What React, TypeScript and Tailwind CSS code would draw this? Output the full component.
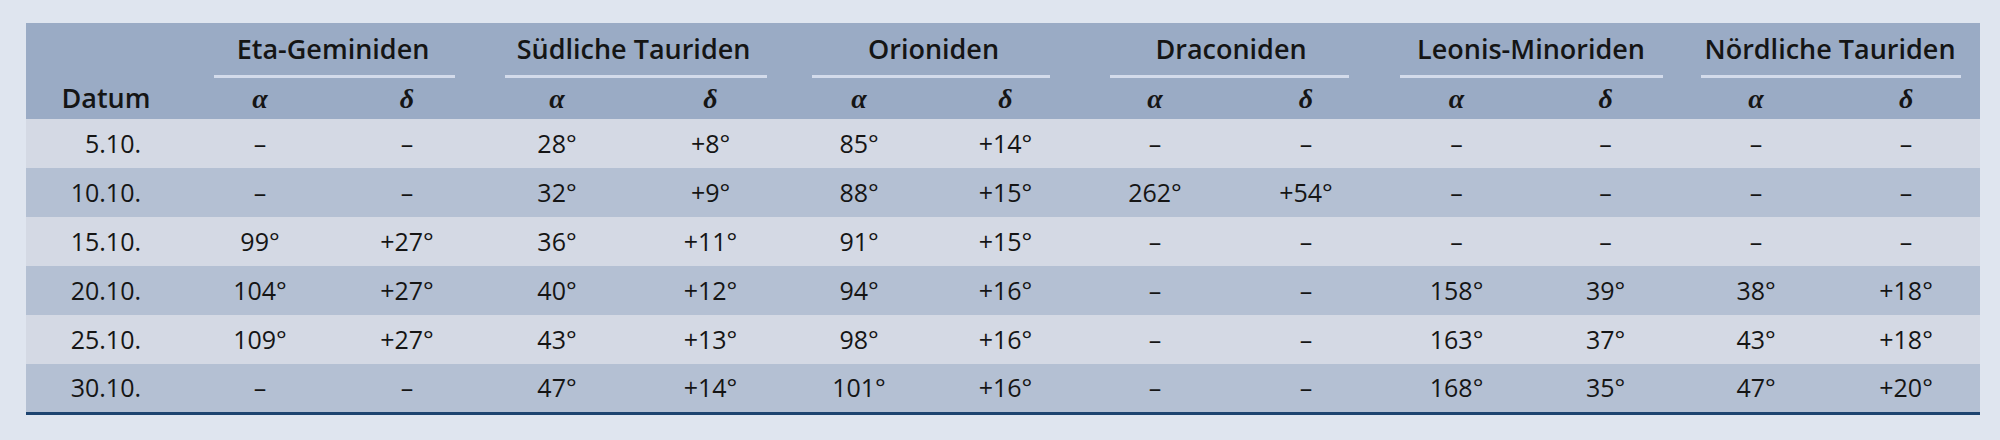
import React from 'react';

type Shower = { name: string; inset: string };

const showers: Shower[] = [
  { name: 'Eta-Geminiden', inset: 'ml-[28px] mr-[25px]' },
  { name: 'Südliche Tauriden', inset: 'ml-[25px] mr-[20px]' },
  { name: 'Orioniden', inset: 'ml-[25px] mr-[30px]' },
  { name: 'Draconiden', inset: 'ml-[30px] mr-[33px]' },
  { name: 'Leonis-Minoriden', inset: 'ml-[18px] mr-[17px]' },
  { name: 'Nördliche Tauriden', inset: 'ml-[21px] mr-[19px]' },
];

// Spaltenbreiten in px (Datum + 12 Wertespalten)
const colWidths = [160, 148, 146, 154, 153, 144, 149, 150, 152, 149, 149, 152, 148];

const rows: string[][] = [
  ['5.10.', '–', '–', '28°', '+8°', '85°', '+14°', '–', '–', '–', '–', '–', '–'],
  ['10.10.', '–', '–', '32°', '+9°', '88°', '+15°', '262°', '+54°', '–', '–', '–', '–'],
  ['15.10.', '99°', '+27°', '36°', '+11°', '91°', '+15°', '–', '–', '–', '–', '–', '–'],
  ['20.10.', '104°', '+27°', '40°', '+12°', '94°', '+16°', '–', '–', '158°', '39°', '38°', '+18°'],
  ['25.10.', '109°', '+27°', '43°', '+13°', '98°', '+16°', '–', '–', '163°', '37°', '43°', '+18°'],
  ['30.10.', '–', '–', '47°', '+14°', '101°', '+16°', '–', '–', '168°', '35°', '47°', '+20°'],
];

const greek = "font-['Liberation_Serif',serif] italic font-bold text-[28px] leading-none";

export default function App() {
  return (
    <div className="min-h-[440px] bg-[#dfe5ef] pt-[23px] pl-[26px] font-['Open_Sans',sans-serif] text-[#151515]">
      <table className="w-[1953px] table-fixed border-collapse text-[25px]">
        <colgroup>
          {colWidths.map((w, i) => (
            <col key={i} style={{ width: w }} />
          ))}
        </colgroup>
        <thead className="bg-[#9aabc5]">
          <tr className="h-[55px]">
            <th
              rowSpan={2}
              className="align-bottom pb-[1px] text-center text-[27px] leading-[40px] font-semibold"
            >
              Datum
            </th>
            {showers.map((s) => (
              <th key={s.name} colSpan={2} className="p-0 align-bottom text-[27px] font-semibold">
                <div className="leading-[34px] whitespace-nowrap">{s.name}</div>
                <div className={`${s.inset} mt-[9px] h-[3px] bg-[#d3dbeb]`} />
              </th>
            ))}
          </tr>
          <tr className="h-[41px]">
            {showers.map((s) => (
              <React.Fragment key={s.name}>
                <th className={greek}>α</th>
                <th className={greek}>δ</th>
              </React.Fragment>
            ))}
          </tr>
        </thead>
        <tbody className="border-b-[3px] border-[#1d4470]">
          {rows.map((r, i) => (
            <tr key={r[0]} className={`h-[49px] ${i % 2 === 0 ? 'bg-[#d4d9e4]' : 'bg-[#b4c0d3]'}`}>
              <td className="pr-[45px] text-right">{r[0]}</td>
              {r.slice(1).map((v, j) => (
                <td key={j} className="text-center">
                  {v}
                </td>
              ))}
            </tr>
          ))}
        </tbody>
      </table>
    </div>
  );
}
